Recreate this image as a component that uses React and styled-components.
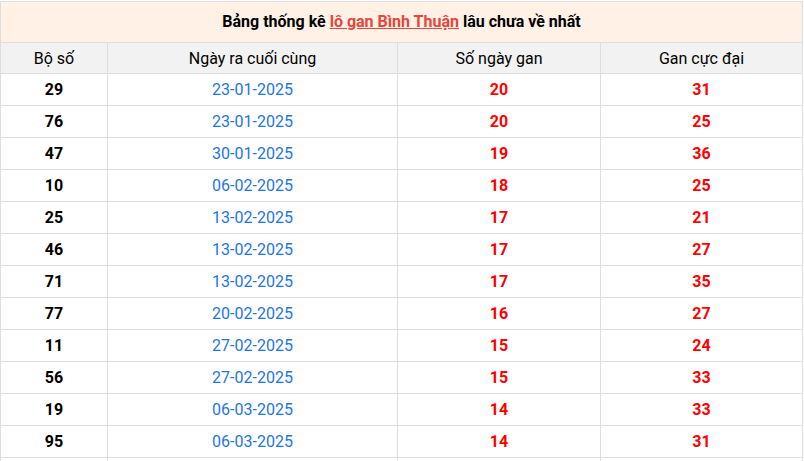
import React from 'react';
import styled, { createGlobalStyle } from 'styled-components';

const Global = createGlobalStyle`
    body{
        margin:0;
        padding-top:1px;
        background:#fff;
        font-family:Roboto, "Liberation Sans", Arial, sans-serif;
    }
`

const Table = styled.table`
    width:802px;
    border-collapse:collapse;
    table-layout:fixed;
    font-size:16px;
    color:#000;
    th,td{
        border:1px solid #dedede;
        text-align:center;
        padding:0;
    }
`

const Caption = styled.th`
    height:38px;
    padding-bottom:2px !important;
    background:#fff1e6;
    font-weight:700;
    font-size:16px;
    a{
        color:#e8453c;
        text-decoration:underline;
    }
`

const Head = styled.th`
    height:30px;
    background:#f2f2f2;
    font-weight:400;
`

const Cell = styled.td`
    height:31px;
    font-weight:${p => (p.$bold ? 700 : 400)};
    color:${p => p.$color || '#000'};
`

{/* dữ liệu */}
const rows = [
    ['29', '23-01-2025', 20, 31],
    ['76', '23-01-2025', 20, 25],
    ['47', '30-01-2025', 19, 36],
    ['10', '06-02-2025', 18, 25],
    ['25', '13-02-2025', 17, 21],
    ['46', '13-02-2025', 17, 27],
    ['71', '13-02-2025', 17, 35],
    ['77', '20-02-2025', 16, 27],
    ['11', '27-02-2025', 15, 24],
    ['56', '27-02-2025', 15, 33],
    ['19', '06-03-2025', 14, 33],
    ['95', '06-03-2025', 14, 31],
]

const App = () => {
    return (
        <>
            <Global/>
            <Table>
                <colgroup>
                    <col style={{width:107}}/>
                    <col style={{width:290}}/>
                    <col style={{width:203}}/>
                    <col style={{width:202}}/>
                </colgroup>
                <thead>
                    <tr>
                        <Caption colSpan={4}>
                            Bảng thống kê <a href="#">lô gan Bình Thuận</a> lâu chưa về nhất
                        </Caption>
                    </tr>
                    <tr>
                        <Head>Bộ số</Head>
                        <Head>Ngày ra cuối cùng</Head>
                        <Head>Số ngày gan</Head>
                        <Head>Gan cực đại</Head>
                    </tr>
                </thead>
                <tbody>
                    {rows.map(r => (
                        <tr key={r[0]}>
                            <Cell $bold>{r[0]}</Cell>
                            <Cell $color='#1e73e8'>{r[1]}</Cell>
                            <Cell $bold $color='#ff0000'>{r[2]}</Cell>
                            <Cell $bold $color='#ff0000'>{r[3]}</Cell>
                        </tr>
                    ))}
                    <tr>
                        <Cell/>
                        <Cell/>
                        <Cell/>
                        <Cell/>
                    </tr>
                </tbody>
            </Table>
        </>
    );
}

export default App;
